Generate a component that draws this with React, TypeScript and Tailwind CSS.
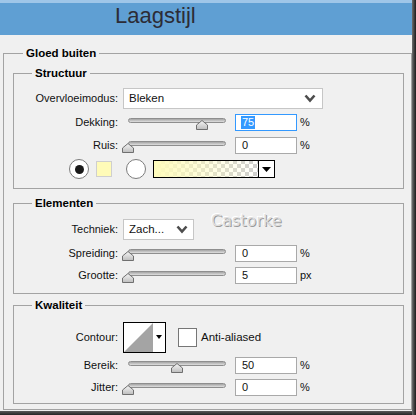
import React from "react"

const Thumb = ({ pct }: { pct: number }) => (
  <svg
    width="12"
    height="10"
    viewBox="0 0 12 10"
    className="absolute top-[6px]"
    style={{ left: 5 + pct * 98 - 6 }}
  >
    <defs>
      <linearGradient id="thg" x1="0" y1="0" x2="0" y2="1">
        <stop offset="0" stopColor="#f6f6f6" />
        <stop offset="1" stopColor="#bdbdbd" />
      </linearGradient>
    </defs>
    <polygon points="0.5,9.5 0.5,5 6,0.5 11.5,5 11.5,9.5" fill="url(#thg)" stroke="#6f6f6f" />
  </svg>
)

function Slider({ pct }: { pct: number }) {
  return (
    <div className="relative w-[108px] h-[17px] px-[5px] pt-[4px]">
      <div className="h-[5px] w-[98px] rounded-full border border-[#8e8e8e] bg-gradient-to-b from-[#a4a4a4] to-[#e0e0e0]" />
      <Thumb pct={pct} />
    </div>
  )
}

function NumInput({ value, unit, focused }: { value: string; unit: string; focused?: boolean }) {
  return (
    <div className="flex items-center">
      <div
        className={
          focused
            ? "w-[62px] h-[17px] bg-white border border-[#3399ff] pl-[5px] flex items-center"
            : "w-[62px] h-[17px] bg-white border border-[#a9a9a9] pl-[6px] flex items-center"
        }
      >
        {focused ? (
          <span className="bg-[#3399ff] text-white px-[1px] leading-[13px]">{value}</span>
        ) : (
          <span className="text-[#111]">{value}</span>
        )}
      </div>
      <span className="ml-[3px] text-[#111]">{unit}</span>
    </div>
  )
}

function Chevron() {
  return (
    <svg width="12" height="9" viewBox="0 0 12 9">
      <polyline points="1.5,1.5 6,6.5 10.5,1.5" fill="none" stroke="#4d4d4d" strokeWidth="2.6" />
    </svg>
  )
}

function Row({ label, h = "h-[17px]", children }: { label: string; h?: string; children: React.ReactNode }) {
  return (
    <div className={"flex items-center " + h}>
      <span className="w-[104px] text-right text-[#111]">{label}</span>
      <div className="ml-[5px] flex items-center">{children}</div>
    </div>
  )
}

function SliderRow({ label, pct, value, unit, focused, mt }: { label: string; pct: number; value: string; unit: string; focused?: boolean; mt: string }) {
  return (
    <div className={mt}>
      <Row label={label}>
        <Slider pct={pct} />
        <div className="ml-[4px]">
          <NumInput value={value} unit={unit} focused={focused} />
        </div>
      </Row>
    </div>
  )
}

function GradientSwatch() {
  return (
    <svg width="122" height="18" viewBox="0 0 122 18">
      <defs>
        <pattern id="chk" width="8" height="8" patternUnits="userSpaceOnUse">
          <rect width="8" height="8" fill="#ffffff" />
          <rect width="4" height="4" fill="#cfcfcf" />
          <rect x="4" y="4" width="4" height="4" fill="#cfcfcf" />
        </pattern>
        <linearGradient id="yg" x1="0" y1="0" x2="1" y2="0">
          <stop offset="0" stopColor="#fffcbc" stopOpacity="1" />
          <stop offset="1" stopColor="#fffcbc" stopOpacity="0" />
        </linearGradient>
      </defs>
      <rect x="0.5" y="0.5" width="105" height="17" fill="url(#chk)" />
      <rect x="0.5" y="0.5" width="105" height="17" fill="url(#yg)" />
      <rect x="105.5" y="0.5" width="16" height="17" fill="#ffffff" />
      <rect x="0.5" y="0.5" width="121" height="17" fill="none" stroke="#000" />
      <line x1="105.5" y1="0" x2="105.5" y2="18" stroke="#000" />
      <polygon points="109,7 118,7 113.5,12" fill="#000" />
    </svg>
  )
}

function ContourBox() {
  return (
    <svg width="43" height="31" viewBox="0 0 43 31">
      <rect x="0.5" y="0.5" width="42" height="30" fill="#ffffff" stroke="#000" />
      <polygon points="1,30 30,1 30,30" fill="#a4a4a4" />
      <polygon points="33,13 39,13 36,17" fill="#000" />
    </svg>
  )
}

export default function App() {
  return (
    <div className="w-[416px] h-[415px] flex overflow-hidden bg-[#f0f0f0] font-['Liberation_Sans',Arial,sans-serif] text-[11px]">
      <div className="w-[412px] flex flex-col">
        <div className="h-[35px] bg-[#5f9fd3] border-t-[3px] border-[#9fc6e8] pl-[115px]">
          <div className="text-[22px] leading-[26px] text-[#2c2c36]">Laagstijl</div>
        </div>

        <div className="flex-1 pl-[3px] pt-[11px]">
          <fieldset className="w-[409px] border border-[#a3a3a3] pl-[9px] pr-[7px] pb-[5px]">
            <legend className="ml-[10px] px-[3px] font-bold text-[11.5px] leading-[14px] text-black">Gloed buiten</legend>

            {/* Structuur */}
            <fieldset className="mt-[6px] w-[391px] border border-[#a3a3a3] pt-[8px] pb-[10px]">
              <legend className="ml-[18px] px-[3px] font-bold text-[11.5px] leading-[14px] text-black">Structuur</legend>
              <Row label="Overvloeimodus:" h="h-[21px]">
                <div className="w-[200px] h-[21px] bg-white border border-[#c6c6c6] flex items-center justify-between pl-[5px] pr-[6px]">
                  <span className="text-[#111] text-[11.5px]">Bleken</span>
                  <Chevron />
                </div>
              </Row>
              <SliderRow mt="mt-[5px]" label="Dekking:" pct={0.75} value="75" unit="%" focused />
              <SliderRow mt="mt-[6px]" label="Ruis:" pct={0} value="0" unit="%" />
              <div className="mt-[6px] h-[18px] flex items-center pl-[55px]">
                <div className="w-[20px] h-[20px] rounded-full bg-white border border-[#7c7c7c] flex items-center justify-center">
                  <div className="w-[9px] h-[9px] rounded-full bg-[#1a1a1a]" />
                </div>
                <div className="ml-[7px] w-[16px] h-[16px] bg-[#fffbb8] border border-[#cfcfcf]" />
                <div className="ml-[14px] w-[20px] h-[20px] rounded-full bg-white border border-[#7c7c7c]" />
                <div className="ml-[7px] flex">
                  <GradientSwatch />
                </div>
              </div>
            </fieldset>

            {/* Elementen */}
            <fieldset className="relative mt-[7px] w-[391px] border border-[#a3a3a3] pt-[9px] pb-[9px]">
              <legend className="ml-[18px] px-[3px] font-bold text-[11.5px] leading-[14px] text-black">Elementen</legend>
              <div className="absolute left-[197px] top-[-1px] text-[16px] text-[#dedede] font-['DejaVu_Sans',sans-serif] [text-shadow:1px_1px_0_#9a9a9a,-1px_-1px_0_#ffffff]">
                Castorke
              </div>
              <Row label="Techniek:" h="h-[21px]">
                <div className="w-[71px] h-[21px] bg-white border border-[#c6c6c6] flex items-center justify-between pl-[5px] pr-[5px]">
                  <span className="text-[#111] text-[11.5px]">Zach...</span>
                  <Chevron />
                </div>
              </Row>
              <SliderRow mt="mt-[5px]" label="Spreiding:" pct={0} value="0" unit="%" />
              <SliderRow mt="mt-[5px]" label="Grootte:" pct={0} value="5" unit="px" />
            </fieldset>

            {/* Kwaliteit */}
            <fieldset className="mt-[4px] w-[391px] border border-[#a3a3a3] pt-[10px] pb-[7px]">
              <legend className="ml-[18px] px-[3px] font-bold text-[11.5px] leading-[14px] text-black">Kwaliteit</legend>
              <Row label="Contour:" h="h-[31px]">
                <div className="flex">
                  <ContourBox />
                </div>
                <div className="ml-[12px] w-[19px] h-[19px] bg-white border border-[#767676]" />
                <span className="ml-[4px] text-[#111] text-[11.5px]">Anti-aliased</span>
              </Row>
              <SliderRow mt="mt-[4px]" label="Bereik:" pct={0.5} value="50" unit="%" />
              <SliderRow mt="mt-[5px]" label="Jitter:" pct={0} value="0" unit="%" />
            </fieldset>
          </fieldset>
        </div>

        <div className="h-[4px] bg-gradient-to-b from-[#5a5a5a] to-[#262626]" />
      </div>
      <div className="w-[4px] bg-gradient-to-r from-[#707070] to-[#1c1c1c]" />
    </div>
  )
}
